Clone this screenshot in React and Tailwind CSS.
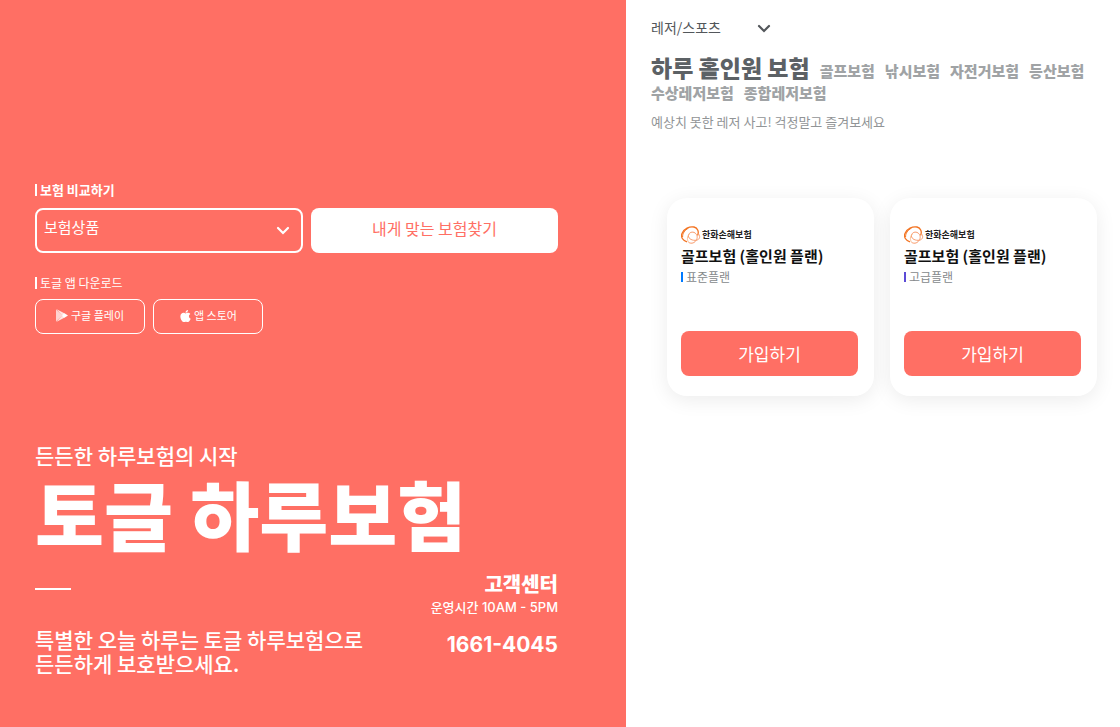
import { useState } from "react"
import { FaApple } from "react-icons/fa"

const tabs = ["하루 홀인원 보험", "골프보험", "낚시보험", "자전거보험", "등산보험", "수상레저보험", "종합레저보험"]

const plans = [
  { id: 1, name: "골프보험 (홀인원 플랜)", plan: "표준플랜", bar: "bg-[#007aff]" },
  { id: 2, name: "골프보험 (홀인원 플랜)", plan: "고급플랜", bar: "bg-[#5b4bd6]" },
]

function Chevron({ className }) {
  return (
    <svg viewBox="0 0 14 9" fill="none" stroke="currentColor" strokeWidth="2.2" className={className} aria-hidden="true">
      <path d="M2 2 L7 7 L12 2" strokeLinecap="round" />
    </svg>
  )
}

function PlayIcon() {
  return (
    <svg viewBox="0 0 12 13" className="h-[13px] w-3" aria-hidden="true">
      <path d="M0 0.4 V12.6 L6.4 6.5 Z" fill="#fff" opacity="0.7" />
      <path d="M0.2 0 L8.3 4.2 L6.2 6.5 Z" fill="#fff" opacity="0.8" />
      <path d="M0.2 13 L8.3 8.8 L6.2 6.5 Z" fill="#fff" opacity="0.8" />
      <path d="M8 4.1 L12 6.5 L8 8.9 L6 6.5 Z" fill="#fff" />
    </svg>
  )
}

function HanwhaLogo() {
  return (
    <div className="flex h-[18px] items-center gap-px">
      <svg viewBox="0 0 20 18" fill="none" className="h-[18px] w-5" aria-hidden="true">
        <path d="M6 15.8 C1.6 14.6 -0.4 11 1 7.4 C2.8 2.8 8.6 0 13 1 C16.8 2 18.2 5.6 16.6 9.4" stroke="#f37321" strokeWidth="1.3" />
        <path d="M1.6 11 C1.4 7.6 3.6 4 7.4 2.2" stroke="#f37321" strokeWidth="1" />
        <path d="M17.2 7.6 C19.8 10.2 18.8 13.6 15.4 14.2 C11.6 14.8 7.6 13 7.4 10 C7.4 7.2 10.2 5.4 13 6.4 C15.8 7.6 17 10.8 15.6 13.6 C14 16.8 10.6 18.2 7.6 16.4" stroke="#f89b6c" strokeWidth="1" />
        <path d="M7.8 16.4 C5.8 14.2 6 10.4 8.4 8" stroke="#fbb584" strokeWidth="0.9" />
      </svg>
      <span className="text-[9px] font-bold leading-3 text-[#222]">한화손해보험</span>
    </div>
  )
}

function PlanCard({ item }) {
  return (
    <li className="flex h-[198px] w-[207px] flex-col rounded-[20px] bg-white pt-7 pr-4 pb-5 pl-[14px] shadow-[0_4px_20px_rgba(0,0,0,0.08)]">
      <HanwhaLogo />
      <h3 className="mt-px whitespace-nowrap text-[15px] font-bold leading-[22px] text-[#111]">{item.name}</h3>
      <p className="mt-[2px] flex items-center gap-[3px] text-xs leading-4 text-[#86898c]">
        <span className={`h-[10px] w-[2px] ${item.bar}`} />
        {item.plan}
      </p>
      <button type="button" className="mt-auto h-[45px] rounded-lg bg-[#ff6f64] text-[17px] text-white">
        가입하기
      </button>
    </li>
  )
}

export default function App() {
  const [active, setActive] = useState(0)

  return (
    <div className="flex min-h-screen bg-white font-['Noto_Sans_CJK_KR',sans-serif]">
      <section className="min-w-0 flex-1 bg-[#ff6f64] pt-[182px] pr-[68px] pb-12 pl-[35px] text-white">
        <form onSubmit={e => e.preventDefault()}>
          <label htmlFor="product" className="flex items-center gap-[3px] text-[13px] font-bold leading-4">
            <span className="h-3 w-[2px] bg-white" />
            보험 비교하기
          </label>
          <div className="mt-[10px] flex gap-2">
            <div className="relative w-[268px]">
              <select
                id="product"
                className="h-[45px] w-full appearance-none rounded-lg border-2 border-white bg-transparent pb-[6px] pl-[7px] text-[15px]"
              >
                <option>보험상품</option>
              </select>
              <Chevron className="pointer-events-none absolute top-[18px] right-[13px] h-[9px] w-[14px]" />
            </div>
            <button type="submit" className="h-[45px] flex-1 rounded-lg bg-white pb-[6px] text-base text-[#ff6f64]">
              내게 맞는 보험찾기
            </button>
          </div>
        </form>

        <h2 className="mt-[22px] flex items-center gap-[3px] text-xs leading-4">
          <span className="h-3 w-[2px] bg-white" />
          토글 앱 다운로드
        </h2>
        <div className="mt-2 flex gap-2 text-[11px]">
          <a href="#google-play" className="flex h-[35px] w-[110px] items-center justify-center gap-[3px] rounded-lg border border-white pb-[2px]">
            <PlayIcon />
            구글 플레이
          </a>
          <a href="#app-store" className="flex h-[35px] w-[110px] items-center justify-center gap-[2px] rounded-lg border border-white pb-[2px]">
            <FaApple className="h-[14px] w-[13px]" />
            앱 스토어
          </a>
        </div>

        <p className="mt-[109px] text-[21px] font-medium leading-6">든든한 하루보험의 시작</p>
        <h1 className="mt-[6px] whitespace-nowrap text-[75px] font-black leading-[80px]">토글 하루보험</h1>

        <div className="mt-[18px] flex justify-between">
          <div>
            <div className="mt-[17px] h-[2px] w-9 bg-white" />
            <p className="mt-[37px] whitespace-nowrap text-[21px] font-medium leading-6">
              특별한 오늘 하루는 토글 하루보험으로
              <br />
              든든하게 보호받으세요.
            </p>
          </div>
          <div className="mt-[2px] whitespace-nowrap text-right font-[Inter,'Noto_Sans_CJK_KR',sans-serif]">
            <h2 className="text-xl font-black leading-6">고객센터</h2>
            <p className="text-[13px] font-medium leading-5">운영시간 10AM - 5PM</p>
            <p className="mt-3 text-[21px] font-bold leading-8">1661-4045</p>
          </div>
        </div>
      </section>

      <main className="w-[494px] shrink-0 pt-[14px] pl-[25px]">
        <div className="relative w-[121px] text-[#53575b]">
          <select aria-label="보험 종류" className="h-6 w-full appearance-none bg-transparent text-sm">
            <option>레저/스포츠</option>
          </select>
          <Chevron className="pointer-events-none absolute top-[10px] right-px h-[9px] w-[14px]" />
        </div>

        <nav className="mt-[15px] flex flex-wrap items-baseline gap-x-[10px]">
          {tabs.map((tab, i) => (
            <button
              key={tab}
              type="button"
              onClick={() => setActive(i)}
              className={
                i === active
                  ? "text-[23px] font-black leading-[26px] text-[#5c6165]"
                  : "text-[15px] font-black leading-[22px] text-[#a0a3a5]"
              }
            >
              {tab}
            </button>
          ))}
        </nav>
        <p className="mt-2 text-[13px] leading-5 text-[#919496]">예상치 못한 레저 사고! 걱정말고 즐겨보세요</p>

        <ul className="mt-[66px] ml-4 flex gap-4">
          {plans.map(item => (
            <PlanCard key={item.id} item={item} />
          ))}
        </ul>
      </main>
    </div>
  )
}
